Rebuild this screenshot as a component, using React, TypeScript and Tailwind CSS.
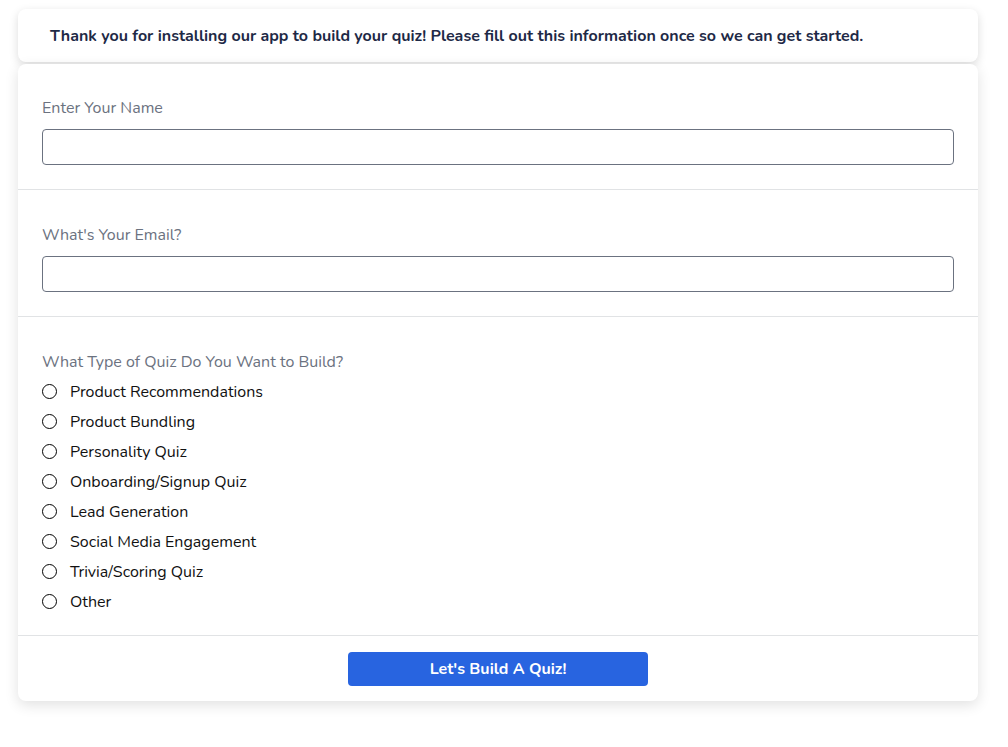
import { useState } from "react";

const quizTypes = [
  "Product Recommendations",
  "Product Bundling",
  "Personality Quiz",
  "Onboarding/Signup Quiz",
  "Lead Generation",
  "Social Media Engagement",
  "Trivia/Scoring Quiz",
  "Other",
];

const font = { fontFamily: "Nunito, Lato, 'Open Sans', sans-serif" };

export default function App() {
  const [name, setName] = useState("");
  const [email, setEmail] = useState("");
  const [type, setType] = useState<string | null>(null);

  return (
    <div className="min-h-[747px] w-full bg-white pl-[18px] pr-[30px] pt-[9px]" style={font}>
      <div className="rounded-lg bg-white px-8 pb-[15px] pt-[17px] shadow-[0_3px_10px_rgba(0,0,0,0.14)]">
        <p className="text-[16px] font-bold leading-[21px] text-[#1e2946]">
          Thank you for installing our app to build your quiz! Please fill out this information once so we can get
          started.
        </p>
      </div>

      <div className="mt-[2px] rounded-lg bg-white shadow-[0_4px_14px_rgba(0,0,0,0.12)]">
        <div className="border-b border-[#e1e3e5] px-6 pb-6 pt-[33px]">
          <label className="block text-[16px] leading-[22px] text-[#6b7280]">Enter Your Name</label>
          <input
            value={name}
            onChange={(e) => setName(e.target.value)}
            className="mt-[10px] block h-9 w-full rounded border border-[#6b7280] px-3 text-[16px] outline-none"
          />
        </div>

        <div className="border-b border-[#e1e3e5] px-6 pb-6 pt-[34px]">
          <label className="block text-[16px] leading-[22px] text-[#6b7280]">What's Your Email?</label>
          <input
            value={email}
            onChange={(e) => setEmail(e.target.value)}
            className="mt-[10px] block h-9 w-full rounded border border-[#6b7280] px-3 text-[16px] outline-none"
          />
        </div>

        <div className="flex flex-col gap-[10px] border-b border-[#e1e3e5] px-6 pb-6 pt-[34px]">
          <p className="pt-[2px] text-[16px] leading-[18px] text-[#6b7280]">What Type of Quiz Do You Want to Build?</p>
          {quizTypes.map((t) => (
            <label key={t} className="flex h-5 cursor-pointer items-center gap-[13px]">
              <span className="flex size-[15px] items-center justify-center rounded-full border-[1.5px] border-black">
                {type === t && <span className="size-[7px] rounded-full bg-black" />}
              </span>
              <input type="radio" name="quizType" className="hidden" checked={type === t} onChange={() => setType(t)} />
              <span className="pt-[2px] text-[16px] leading-[20px] text-[#111]">{t}</span>
            </label>
          ))}
        </div>

        <div className="flex justify-center pb-[15px] pt-4">
          <button className="h-[34px] w-[300px] rounded bg-[#2864e0] text-[16px] font-bold text-white">
            Let's Build A Quiz!
          </button>
        </div>
      </div>
    </div>
  );
}
